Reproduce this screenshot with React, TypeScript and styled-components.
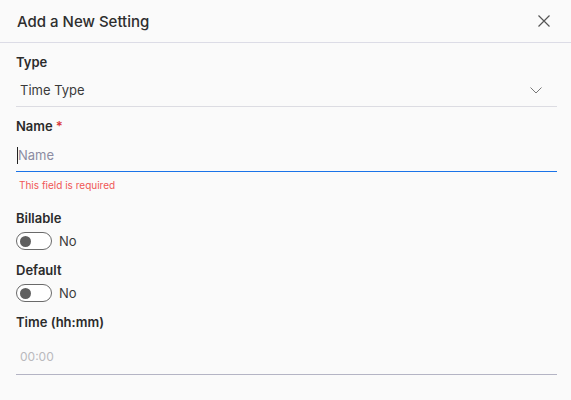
import styled, { createGlobalStyle } from "styled-components";

const Global = createGlobalStyle`
  body {
    margin: 0;
    background: #fafafa;
    font-family: Inter, "Noto Sans", sans-serif;
  }
`

const Dialog = styled.div`
  width: 571px;
  height: 400px;
  background: #fafafa;
`

const Header = styled.div`
  height: 42px;
  display: flex;
  align-items: center;
  justify-content: space-between;
  padding: 0 21px 0 17px;
  border-bottom: 1px solid #dcdce6;
`

const Title = styled.div`
  font-size: 15px;
  font-weight: 500;
  color: #2e2e2e;
`

const CloseButton = styled.button`
  border: none;
  background: none;
  padding: 0;
  display: flex;
  cursor: pointer;
`

const Body = styled.div`
  padding: 0 14px 0 16px;
  display: flex;
  flex-direction: column;
`

const Label = styled.div<{ $top: number }>`
  margin-top: ${p => p.$top}px;
  font-size: 13px;
  line-height: 16px;
  font-weight: 600;
  color: #2b2b2b;
`

const Required = styled.span`
  color: #d9383a;
  margin-left: 3px;
`

const SelectRow = styled.div`
  height: 37px;
  box-sizing: border-box;
  padding: 4px 15px 0 4px;
  display: flex;
  align-items: center;
  justify-content: space-between;
  border-bottom: 1px solid #dcdce2;
  font-size: 13px;
  color: #3a3a3a;
`

const InputBox = styled.div<{ $focused?: boolean; $h: number; $pt: number }>`
  height: ${p => p.$h}px;
  box-sizing: border-box;
  display: flex;
  align-items: center;
  padding: ${p => p.$pt}px 0 0 ${p => (p.$focused ? 1 : 4)}px;
  border-bottom: 1px solid ${p => (p.$focused ? "#1a73e8" : "#b4b4c4")};
`

const Caret = styled.span`
  width: 1px;
  height: 17px;
  background: #222;
`

const Placeholder = styled.span<{ $muted?: boolean }>`
  font-size: ${p => (p.$muted ? 12 : 13)}px;
  color: ${p => (p.$muted ? "#b9b9bd" : "#8c8ca2")};
`

const ErrorText = styled.div`
  margin-top: 7px;
  padding-left: 3px;
  font-size: 10px;
  line-height: 12px;
  color: #f05656;
`

const ToggleRow = styled.div`
  margin-top: 6px;
  height: 18px;
  display: flex;
  align-items: center;
  gap: 7px;
  font-size: 13px;
  color: #3a3a3a;
`

const Track = styled.div`
  width: 36px;
  height: 18px;
  box-sizing: border-box;
  border: 1.4px solid #6a6a6a;
  border-radius: 9px;
  background: #fff;
  display: flex;
  align-items: center;
  padding-left: 3px;
`

const Knob = styled.div`
  width: 11px;
  height: 11px;
  border-radius: 50%;
  background: #5f5f5f;
`

function Toggle({ label }: { label: string }) {
  return (
    <ToggleRow>
      <Track><Knob /></Track>
      {label}
    </ToggleRow>
  )
}

export default function App() {
  return (
    <>
      <Global />
      <Dialog>
        <Header>
          <Title>Add a New Setting</Title>
          <CloseButton>
            <svg width="12" height="12" viewBox="0 0 12 12">
              <path d="M0.5 0.5 L11.5 11.5 M11.5 0.5 L0.5 11.5" stroke="#555" strokeWidth="1.2" fill="none" />
            </svg>
          </CloseButton>
        </Header>
        <Body>
          <Label $top={11}>Type</Label>
          <SelectRow>
            Time Type
            <svg width="12" height="7" viewBox="0 0 12 7">
              <path d="M0.5 0.5 L6 6 L11.5 0.5" stroke="#777" strokeWidth="1" fill="none" />
            </svg>
          </SelectRow>
          <Label $top={11}>Name<Required>*</Required></Label>
          <InputBox $focused $h={38} $pt={5}>
            <Caret />
            <Placeholder>Name</Placeholder>
          </InputBox>
          <ErrorText>This field is required</ErrorText>
          <Label $top={19}>Billable</Label>
          <Toggle label="No" />
          <Label $top={12}>Default</Label>
          <Toggle label="No" />
          <Label $top={12}>Time (hh:mm)</Label>
          <InputBox $h={45} $pt={8}>
            <Placeholder $muted>00:00</Placeholder>
          </InputBox>
        </Body>
      </Dialog>
    </>
  )
}
